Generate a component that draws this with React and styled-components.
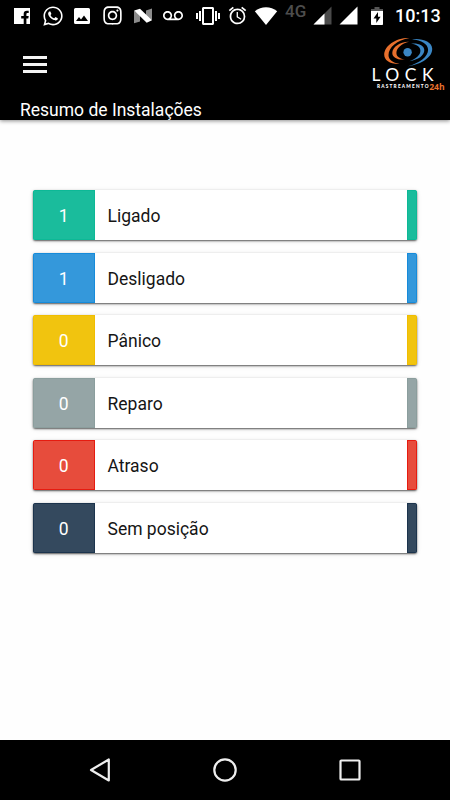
import React from 'react';
import styled, { createGlobalStyle } from 'styled-components';
import { FaWhatsapp, FaInstagram } from 'react-icons/fa';
import { MdAlarm, MdVibration, MdVoicemail } from 'react-icons/md';

const GlobalStyle = createGlobalStyle`
  body {
    margin: 0;
    background: #fff;
    font-family: Roboto, sans-serif;
  }
`

const Screen = styled.div`
  display: flex;
  flex-direction: column;
  width: 450px;
  height: 800px;
  overflow: hidden;
  background: #fefefe;
`

const StatusBar = styled.div`
  display: flex;
  height: 31px;
  color: #fff;
  background: #000;
`

const StatusIcon = styled.span`
  display: flex;
  flex: none;
  align-items: center;
  justify-content: center;
  width: ${props => props.$width}px;
  height: 31px;
  margin-left: ${props => props.$gap || 0}px;
  svg {
    display: block;
    flex: none;
  }
`

const Network = styled.span`
  width: 23px;
  margin-left: 7px;
  padding-top: 1px;
  color: #4d4d4d;
  font-size: 17px;
  font-weight: 500;
  line-height: 20px;
`

const Clock = styled.span`
  margin-left: 12px;
  font-size: 18px;
  font-weight: 500;
  line-height: 31px;
  white-space: nowrap;
`

const Header = styled.header`
  display: flex;
  flex-direction: column;
  height: 89px;
  color: #fff;
  background: #000;
  box-shadow: 0 1px 4px rgba(0, 0, 0, 0.45);
`

const HeaderTop = styled.div`
  display: flex;
  flex: none;
  justify-content: space-between;
  height: 67px;
  padding-left: 23px;
`

const MenuButton = styled.button`
  display: flex;
  flex-direction: column;
  gap: 4px;
  width: 24px;
  height: 17px;
  margin: 25px 0 0;
  padding: 0;
  border: 0;
  background: none;
`

const MenuLine = styled.span`
  height: 3px;
  background: #f4f4f4;
`

const Title = styled.h1`
  margin: 0 0 0 20px;
  font-size: 17.5px;
  font-weight: 400;
  line-height: 24px;
`

const List = styled.main`
  display: flex;
  flex: 1;
  flex-direction: column;
  gap: 12.5px;
  padding: 70px 33px 0 32.5px;
`

const Card = styled.div`
  display: flex;
  align-items: stretch;
  flex: none;
  height: 50px;
  overflow: hidden;
  border-radius: 2.5px;
  background: #fff;
  box-shadow: 0 1px 2px rgba(0, 0, 0, 0.62), 0 1px 5px rgba(0, 0, 0, 0.12);
`

const Count = styled.span`
  display: flex;
  align-items: center;
  justify-content: center;
  box-sizing: border-box;
  width: 62.5px;
  padding-top: 2px;
  border: 1px solid ${props => props.$edge};
  color: #fff;
  background: ${props => props.$color};
  font-size: 17.5px;
`

const Label = styled.span`
  flex: 1;
  padding: 1px 0 0 12.5px;
  color: #151515;
  font-size: 17.5px;
  line-height: 50px;
`

const Stripe = styled.span`
  box-sizing: border-box;
  width: 10px;
  border: 1px solid ${props => props.$edge};
  background: ${props => props.$color};
`

const NavBar = styled.nav`
  display: flex;
  justify-content: space-between;
  align-items: center;
  height: 60px;
  padding: 0 87px;
  background: #000;
`

const Facebook = () => (
  <svg width="18" height="18" viewBox="0 0 18 18">
    <path fill="#fff" d="M1 1h16v16h-3.600v-5.600h1.900l.4-2.500h-2.300V7.300c0-.8.400-1.200 1.200-1.200h1.100V3.800h-1.900c-2 0-3.100 1.100-3.100 3v2.100H8.200v2.500h2.500V17H1z" />
  </svg>
)

const Gallery = () => (
  <svg width="18" height="18" viewBox="0 0 18 18">
    <path fill="#fff" fillRule="evenodd" d="M2.500 1h13A1.500 1.500 0 0 1 17 2.500v13a1.500 1.500 0 0 1-1.500 1.500h-13A1.500 1.500 0 0 1 1 15.500v-13A1.500 1.500 0 0 1 2.500 1zM3 14h12l-4-5.500-3 4-2-2.400z" />
  </svg>
)

const Nougat = () => (
  <svg width="20" height="18" viewBox="0 0 20 18">
    <path fill="#8c8c8c" d="M1 3.500 7 7v7.500l-6 1.700zM13 3.500l6-2V13l-6-2z" />
    <path fill="#fff" d="M1.200 3.500 7 1.800l12 11.400-5.300 2.500z" />
  </svg>
)

const Wifi = () => (
  <svg width="24" height="20" viewBox="0 0 24 20">
    <path fill="#fff" d="M.8 5.200C7.300-.1 16.700-.1 23.200 5.200L12 19z" />
  </svg>
)

const Signal = ({ weak }) => (
  <svg width="19" height="19" viewBox="0 0 19 19">
    <path fill={weak ? '#4a4a4a' : '#fff'} d="M.5 18.500h18V.5z" />
    {weak && <path fill="#fff" d="M.5 18.500h11v-11z" />}
  </svg>
)

const Battery = () => (
  <svg width="12" height="18" viewBox="0 0 12 18">
    <path fill="#555" d="M3.500 0h5v2H12v2H0V2h3.500z" />
    <path fill="#fff" fillRule="evenodd" d="M0 4h12v13.200a.8.8 0 0 1-.8.8H.8a.8.8 0 0 1-.8-.8zM7 5 2.500 11.500h2.800V16L9.600 9.700H7z" />
  </svg>
)

const Logo = () => (
  <svg width="80" height="64" viewBox="370 31 80 64">
    <g fill="#e8702d">
      <path d="M409.500 37.900C396 37.500 384.500 45.500 384.200 54.500c-.1 5.800 5.800 9.700 15.300 9.400-6.900-1.200-11-4.300-11-8.900.1-7.800 8.500-14.900 21-17.100z" />
      <path d="M409 41.700c-8.500-.3-16.700 5.200-16.700 11.300 0 4.500 5.200 7.200 12.700 6.500-5.200-.9-8.600-3.100-8.600-6.600.1-5 5.200-9.400 12.600-11.200z" />
    </g>
    <g fill="#3a86c4">
      <path d="M412 39.300c10.500-1.100 20 2.500 20.200 9.500.3 8.200-10.200 15.500-24.200 17.400 11.500-3.300 20.200-9.500 20.100-16.500-.1-5.600-6.500-9.400-16.100-10.400z" />
      <path d="M411 43.600c7.300-.8 13.200 1.800 13.300 6.500.1 5.400-6 9.900-14.800 11.100 6.300-2.300 11-6.200 10.900-10.500-.1-3.600-3.500-6.100-9.400-7.100z" />
      <circle cx="407.600" cy="52.300" r="4.200" />
    </g>
    <text x="371.500" y="81.200" fill="#fff" fontFamily="Lato, sans-serif" fontSize="17.500" textLength="62">LOCK</text>
    <text x="377" y="87.800" fill="#fff" fontFamily="Lato, sans-serif" fontWeight="900" fontSize="4.700" textLength="51.500">RASTREAMENTO</text>
    <text x="429.200" y="89.600" fill="#e8702d" fontFamily="Open Sans, sans-serif" fontWeight="700" fontSize="8.500" textLength="15.500" lengthAdjust="spacingAndGlyphs">24h</text>
  </svg>
)

const groups = [
  { label: 'Ligado', count: 1, color: '#1abc9c', edge: '#0db896' },
  { label: 'Desligado', count: 1, color: '#3498db', edge: '#168bda' },
  { label: 'Pânico', count: 0, color: '#f1c40f', edge: '#f0bd00' },
  { label: 'Reparo', count: 0, color: '#95a5a6', edge: '#8b9e9d' },
  { label: 'Atraso', count: 0, color: '#e74c3c', edge: '#e61b10' },
  { label: 'Sem posição', count: 0, color: '#34495e', edge: '#1c344d' },
]

const App = () => (
  <Screen>
    <GlobalStyle />
    <StatusBar>
      <StatusIcon $width={18} $gap={13}><Facebook /></StatusIcon>
      <StatusIcon $width={22} $gap={11}><FaWhatsapp size={22} /></StatusIcon>
      <StatusIcon $width={18} $gap={9}><Gallery /></StatusIcon>
      <StatusIcon $width={20} $gap={11}><FaInstagram size={21} /></StatusIcon>
      <StatusIcon $width={20} $gap={11}><Nougat /></StatusIcon>
      <StatusIcon $width={20} $gap={10}><MdVoicemail size={20} /></StatusIcon>
      <StatusIcon $width={24} $gap={13}><MdVibration size={24} /></StatusIcon>
      <StatusIcon $width={20} $gap={7}><MdAlarm size={21} /></StatusIcon>
      <StatusIcon $width={24} $gap={7}><Wifi /></StatusIcon>
      <Network>4G</Network>
      <StatusIcon $width={19} $gap={5}><Signal weak /></StatusIcon>
      <StatusIcon $width={19} $gap={7}><Signal /></StatusIcon>
      <StatusIcon $width={12} $gap={13}><Battery /></StatusIcon>
      <Clock>10:13</Clock>
    </StatusBar>
    <Header>
      <HeaderTop>
        <MenuButton aria-label="Menu">
          <MenuLine />
          <MenuLine />
          <MenuLine />
        </MenuButton>
        <Logo />
      </HeaderTop>
      <Title>Resumo de Instalações</Title>
    </Header>
    <List>
      {groups.map(group => (
        <Card key={group.label}>
          <Count $color={group.color} $edge={group.edge}>{group.count}</Count>
          <Label>{group.label}</Label>
          <Stripe $color={group.color} $edge={group.edge} />
        </Card>
      ))}
    </List>
    <NavBar>
      <svg width="26" height="26" viewBox="0 0 26 26" fill="none" stroke="#eee" strokeWidth="2.200" strokeLinejoin="round">
        <path d="M21.800 2.500v21L4 13z" />
      </svg>
      <svg width="26" height="26" viewBox="0 0 26 26" fill="none" stroke="#eee" strokeWidth="2.200">
        <circle cx="13" cy="13" r="10.700" />
      </svg>
      <svg width="26" height="26" viewBox="0 0 26 26" fill="none" stroke="#eee" strokeWidth="2.200">
        <rect x="3.500" y="3.500" width="19" height="19" rx="0.800" />
      </svg>
    </NavBar>
  </Screen>
)

export default App;
